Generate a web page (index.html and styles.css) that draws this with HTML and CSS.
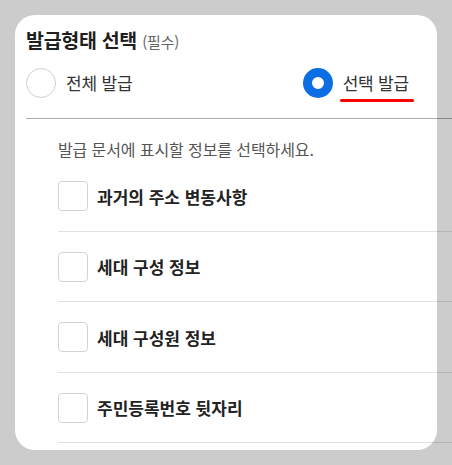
FILE: index.html
```html
<!DOCTYPE html>
<html lang="ko">
<head>
<meta charset="utf-8">
<link rel="stylesheet" href="styles.css">
</head>
<body>
<div class="card">
  <h2 class="title">발급형태 선택 <span class="req">(필수)</span></h2>
  <div class="radios">
    <label class="radio">
      <span class="circle"></span>
      <span class="rtext">전체 발급</span>
    </label>
    <label class="radio on">
      <span class="circle"></span>
      <span class="rtext">선택 발급</span>
    </label>
  </div>
  <div class="divider"></div>
  <div class="section">
    <p class="desc">발급 문서에 표시할 정보를 선택하세요.</p>
    <ul class="list">
      <li class="row"><span class="box"></span><span class="label">과거의 주소 변동사항</span></li>
      <li class="row"><span class="box"></span><span class="label">세대 구성 정보</span></li>
      <li class="row"><span class="box"></span><span class="label">세대 구성원 정보</span></li>
      <li class="row"><span class="box"></span><span class="label">주민등록번호 뒷자리</span></li>
    </ul>
  </div>
</div>
</body>
</html>
```

FILE: styles.css
```css
html { overflow: hidden; }
body {
  margin: 0;
  padding: 15px;
  background: #cccccc;
  font-family: "Noto Sans CJK KR", "Noto Sans", sans-serif;
  color: #222;
}
.card {
  width: 422px;
  height: 435px;
  box-sizing: border-box;
  background: #fff;
  border-radius: 20px;
  padding: 12px 0 0 11px;
}
.title {
  margin: 0;
  font-size: 19.5px;
  line-height: 26px;
  font-weight: 700;
  color: #1f1f1f;
  letter-spacing: -0.3px;
}
.req {
  font-size: 15px;
  font-weight: 400;
  color: #666;
  letter-spacing: -0.2px;
}
.radios {
  display: flex;
  justify-content: space-between;
  align-items: center;
  margin-top: 13px;
  padding-right: 28px;
  height: 30px;
}
.radio {
  display: flex;
  align-items: center;
  gap: 10px;
  position: relative;
}
.circle {
  width: 30px;
  height: 30px;
  box-sizing: border-box;
  border-radius: 50%;
  border: 1px solid #cfcfcf;
}
.radio.on .circle {
  border: 9px solid #0b6fe3;
}
.rtext {
  font-size: 17px;
  line-height: 24px;
  color: #333;
  letter-spacing: -0.2px;
}
.radio.on .rtext { position: relative; }
.radio.on .rtext::after {
  content: "";
  position: absolute;
  left: -3px;
  right: -5px;
  bottom: -7px;
  height: 3px;
  border-radius: 2px;
  background: #ff0000;
}
.divider {
  height: 1px;
  margin-top: 20px;
  margin-right: -40px;
  background: rgba(0, 0, 0, 0.33);
}
.section {
  padding-left: 32px;
}
.desc {
  margin: 19px 0 1px;
  font-size: 16px;
  line-height: 22px;
  color: #555;
  letter-spacing: -0.1px;
}
.list {
  list-style: none;
  margin: 0 -40px 0 0;
  padding: 0;
}
.row {
  display: flex;
  align-items: center;
  gap: 9px;
  padding: 20px 0 19.5px;
  border-bottom: 1px solid rgba(0, 0, 40, 0.12);
}
.box {
  width: 30px;
  height: 30px;
  box-sizing: border-box;
  border: 1px solid #d4d4d4;
  border-radius: 4px;
}
.label {
  font-size: 17px;
  font-weight: 700;
  color: #222;
  letter-spacing: 0;
}
```
